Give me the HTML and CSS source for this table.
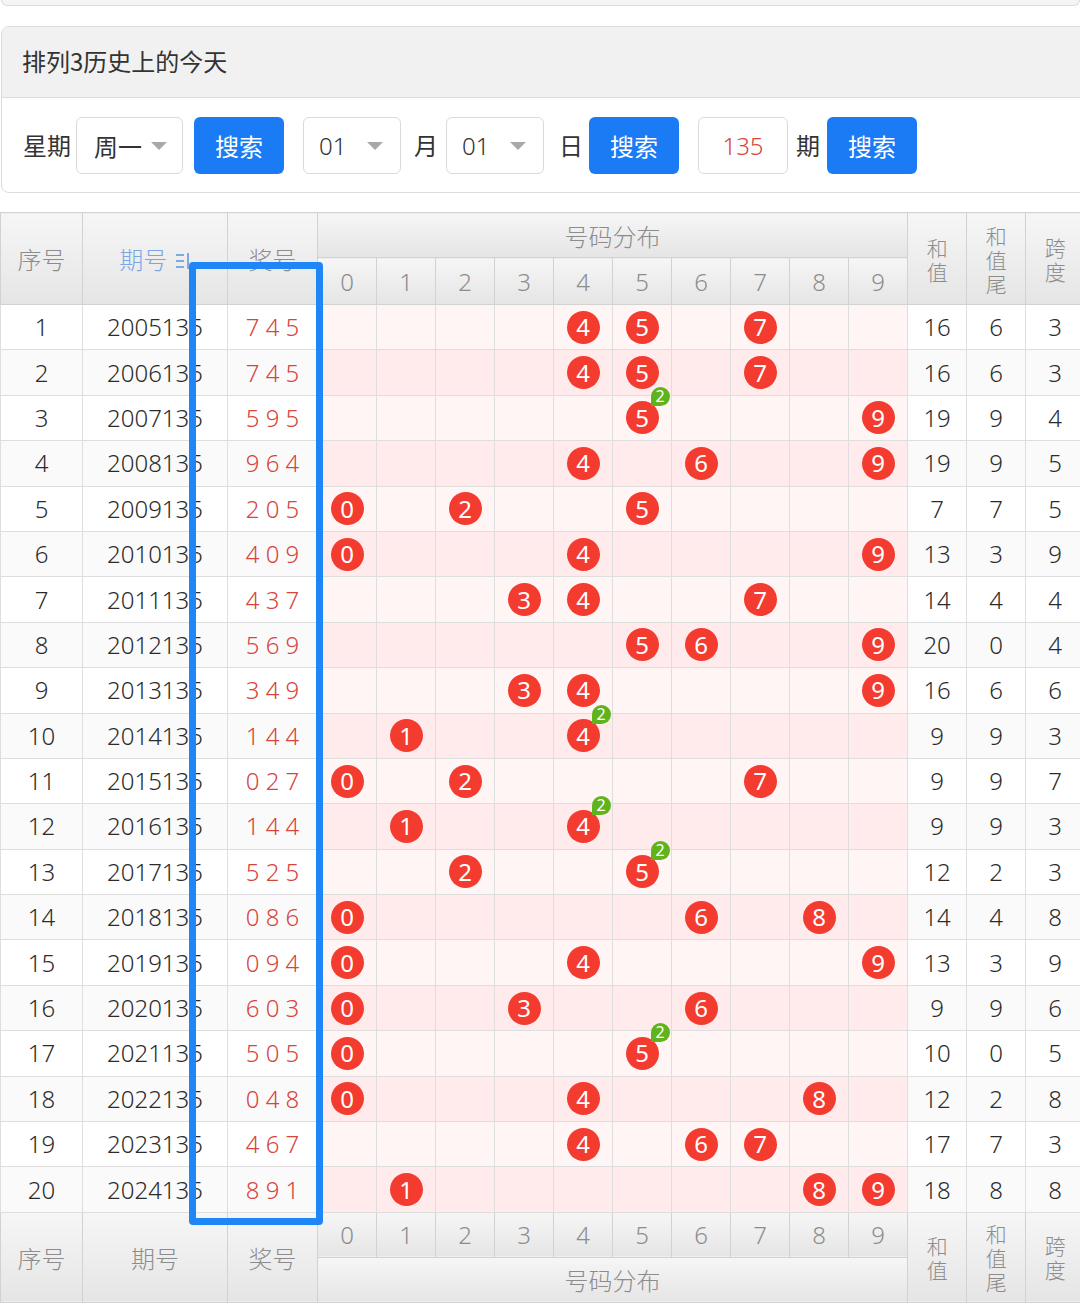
FILE: index.html
```html
<!DOCTYPE html>
<html lang="zh-CN">
<head>
<meta charset="utf-8">
<title>排列3历史上的今天</title>
<link rel="stylesheet" href="styles.css">
</head>
<body>
<div class="prev-card"></div>
<section class="card">
  <div class="card-head">排列3历史上的今天</div>
  <div class="card-body">
    <span class="lbl">星期</span>
    <span class="sel sel-week"><span class="val">周一</span><i class="caret"></i></span>
    <button class="btn b1">搜索</button>
    <span class="sel sel-num s2"><span class="val">01</span><i class="caret"></i></span>
    <span class="lbl l-month">月</span>
    <span class="sel sel-num s3"><span class="val">01</span><i class="caret"></i></span>
    <span class="lbl l-day">日</span>
    <button class="btn b2">搜索</button>
    <span class="inp">135</span>
    <span class="lbl l-qi">期</span>
    <button class="btn b3">搜索</button>
  </div>
</section>

<div class="table-wrap">
<table class="chart">
  <colgroup>
    <col class="c-no"><col class="c-issue"><col class="c-award">
    <col class="c-d"><col class="c-d"><col class="c-d"><col class="c-d"><col class="c-d">
    <col class="c-d"><col class="c-d"><col class="c-d"><col class="c-d"><col class="c-d">
    <col class="c-s"><col class="c-s"><col class="c-s">
  </colgroup>
  <thead>
    <tr class="h1">
      <th rowspan="2">序号</th>
      <th rowspan="2" class="sort">期号 <svg class="sort-ico" width="16" height="20" viewBox="0 0 16 20"><path d="M1 4h8M1 10h8M1 16h8M13 2v16" stroke="#7fa9e3" stroke-width="2" fill="none"/></svg></th>
      <th rowspan="2">奖号</th>
      <th colspan="10">号码分布</th>
      <th rowspan="2" class="vt">和<br>值</th>
      <th rowspan="2" class="vt">和<br>值<br>尾</th>
      <th rowspan="2" class="vt">跨<br>度</th>
    </tr>
    <tr class="h2">
      <th>0</th><th>1</th><th>2</th><th>3</th><th>4</th><th>5</th><th>6</th><th>7</th><th>8</th><th>9</th>
    </tr>
  </thead>
  <tbody>
    <tr><td>1</td><td>2005135</td><td class="aw">7 4 5</td><td class="d"></td><td class="d"></td><td class="d"></td><td class="d"></td><td class="d"><span class="ball">4</span></td><td class="d"><span class="ball">5</span></td><td class="d"></td><td class="d"><span class="ball">7</span></td><td class="d"></td><td class="d"></td><td>16</td><td>6</td><td>3</td></tr>
    <tr><td>2</td><td>2006135</td><td class="aw">7 4 5</td><td class="d"></td><td class="d"></td><td class="d"></td><td class="d"></td><td class="d"><span class="ball">4</span></td><td class="d"><span class="ball">5</span></td><td class="d"></td><td class="d"><span class="ball">7</span></td><td class="d"></td><td class="d"></td><td>16</td><td>6</td><td>3</td></tr>
    <tr><td>3</td><td>2007135</td><td class="aw">5 9 5</td><td class="d"></td><td class="d"></td><td class="d"></td><td class="d"></td><td class="d"></td><td class="d"><span class="ball">5<i class="rep">2</i></span></td><td class="d"></td><td class="d"></td><td class="d"></td><td class="d"><span class="ball">9</span></td><td>19</td><td>9</td><td>4</td></tr>
    <tr><td>4</td><td>2008135</td><td class="aw">9 6 4</td><td class="d"></td><td class="d"></td><td class="d"></td><td class="d"></td><td class="d"><span class="ball">4</span></td><td class="d"></td><td class="d"><span class="ball">6</span></td><td class="d"></td><td class="d"></td><td class="d"><span class="ball">9</span></td><td>19</td><td>9</td><td>5</td></tr>
    <tr><td>5</td><td>2009135</td><td class="aw">2 0 5</td><td class="d"><span class="ball">0</span></td><td class="d"></td><td class="d"><span class="ball">2</span></td><td class="d"></td><td class="d"></td><td class="d"><span class="ball">5</span></td><td class="d"></td><td class="d"></td><td class="d"></td><td class="d"></td><td>7</td><td>7</td><td>5</td></tr>
    <tr><td>6</td><td>2010135</td><td class="aw">4 0 9</td><td class="d"><span class="ball">0</span></td><td class="d"></td><td class="d"></td><td class="d"></td><td class="d"><span class="ball">4</span></td><td class="d"></td><td class="d"></td><td class="d"></td><td class="d"></td><td class="d"><span class="ball">9</span></td><td>13</td><td>3</td><td>9</td></tr>
    <tr><td>7</td><td>2011135</td><td class="aw">4 3 7</td><td class="d"></td><td class="d"></td><td class="d"></td><td class="d"><span class="ball">3</span></td><td class="d"><span class="ball">4</span></td><td class="d"></td><td class="d"></td><td class="d"><span class="ball">7</span></td><td class="d"></td><td class="d"></td><td>14</td><td>4</td><td>4</td></tr>
    <tr><td>8</td><td>2012135</td><td class="aw">5 6 9</td><td class="d"></td><td class="d"></td><td class="d"></td><td class="d"></td><td class="d"></td><td class="d"><span class="ball">5</span></td><td class="d"><span class="ball">6</span></td><td class="d"></td><td class="d"></td><td class="d"><span class="ball">9</span></td><td>20</td><td>0</td><td>4</td></tr>
    <tr><td>9</td><td>2013135</td><td class="aw">3 4 9</td><td class="d"></td><td class="d"></td><td class="d"></td><td class="d"><span class="ball">3</span></td><td class="d"><span class="ball">4</span></td><td class="d"></td><td class="d"></td><td class="d"></td><td class="d"></td><td class="d"><span class="ball">9</span></td><td>16</td><td>6</td><td>6</td></tr>
    <tr><td>10</td><td>2014135</td><td class="aw">1 4 4</td><td class="d"></td><td class="d"><span class="ball">1</span></td><td class="d"></td><td class="d"></td><td class="d"><span class="ball">4<i class="rep">2</i></span></td><td class="d"></td><td class="d"></td><td class="d"></td><td class="d"></td><td class="d"></td><td>9</td><td>9</td><td>3</td></tr>
    <tr><td>11</td><td>2015135</td><td class="aw">0 2 7</td><td class="d"><span class="ball">0</span></td><td class="d"></td><td class="d"><span class="ball">2</span></td><td class="d"></td><td class="d"></td><td class="d"></td><td class="d"></td><td class="d"><span class="ball">7</span></td><td class="d"></td><td class="d"></td><td>9</td><td>9</td><td>7</td></tr>
    <tr><td>12</td><td>2016135</td><td class="aw">1 4 4</td><td class="d"></td><td class="d"><span class="ball">1</span></td><td class="d"></td><td class="d"></td><td class="d"><span class="ball">4<i class="rep">2</i></span></td><td class="d"></td><td class="d"></td><td class="d"></td><td class="d"></td><td class="d"></td><td>9</td><td>9</td><td>3</td></tr>
    <tr><td>13</td><td>2017135</td><td class="aw">5 2 5</td><td class="d"></td><td class="d"></td><td class="d"><span class="ball">2</span></td><td class="d"></td><td class="d"></td><td class="d"><span class="ball">5<i class="rep">2</i></span></td><td class="d"></td><td class="d"></td><td class="d"></td><td class="d"></td><td>12</td><td>2</td><td>3</td></tr>
    <tr><td>14</td><td>2018135</td><td class="aw">0 8 6</td><td class="d"><span class="ball">0</span></td><td class="d"></td><td class="d"></td><td class="d"></td><td class="d"></td><td class="d"></td><td class="d"><span class="ball">6</span></td><td class="d"></td><td class="d"><span class="ball">8</span></td><td class="d"></td><td>14</td><td>4</td><td>8</td></tr>
    <tr><td>15</td><td>2019135</td><td class="aw">0 9 4</td><td class="d"><span class="ball">0</span></td><td class="d"></td><td class="d"></td><td class="d"></td><td class="d"><span class="ball">4</span></td><td class="d"></td><td class="d"></td><td class="d"></td><td class="d"></td><td class="d"><span class="ball">9</span></td><td>13</td><td>3</td><td>9</td></tr>
    <tr><td>16</td><td>2020135</td><td class="aw">6 0 3</td><td class="d"><span class="ball">0</span></td><td class="d"></td><td class="d"></td><td class="d"><span class="ball">3</span></td><td class="d"></td><td class="d"></td><td class="d"><span class="ball">6</span></td><td class="d"></td><td class="d"></td><td class="d"></td><td>9</td><td>9</td><td>6</td></tr>
    <tr><td>17</td><td>2021135</td><td class="aw">5 0 5</td><td class="d"><span class="ball">0</span></td><td class="d"></td><td class="d"></td><td class="d"></td><td class="d"></td><td class="d"><span class="ball">5<i class="rep">2</i></span></td><td class="d"></td><td class="d"></td><td class="d"></td><td class="d"></td><td>10</td><td>0</td><td>5</td></tr>
    <tr><td>18</td><td>2022135</td><td class="aw">0 4 8</td><td class="d"><span class="ball">0</span></td><td class="d"></td><td class="d"></td><td class="d"></td><td class="d"><span class="ball">4</span></td><td class="d"></td><td class="d"></td><td class="d"></td><td class="d"><span class="ball">8</span></td><td class="d"></td><td>12</td><td>2</td><td>8</td></tr>
    <tr><td>19</td><td>2023135</td><td class="aw">4 6 7</td><td class="d"></td><td class="d"></td><td class="d"></td><td class="d"></td><td class="d"><span class="ball">4</span></td><td class="d"></td><td class="d"><span class="ball">6</span></td><td class="d"><span class="ball">7</span></td><td class="d"></td><td class="d"></td><td>17</td><td>7</td><td>3</td></tr>
    <tr><td>20</td><td>2024135</td><td class="aw">8 9 1</td><td class="d"></td><td class="d"><span class="ball">1</span></td><td class="d"></td><td class="d"></td><td class="d"></td><td class="d"></td><td class="d"></td><td class="d"></td><td class="d"><span class="ball">8</span></td><td class="d"><span class="ball">9</span></td><td>18</td><td>8</td><td>8</td></tr>
  </tbody>
  <tfoot>
    <tr class="f1">
      <th rowspan="2">序号</th>
      <th rowspan="2">期号</th>
      <th rowspan="2">奖号</th>
      <th>0</th><th>1</th><th>2</th><th>3</th><th>4</th><th>5</th><th>6</th><th>7</th><th>8</th><th>9</th>
      <th rowspan="2" class="vt">和<br>值</th>
      <th rowspan="2" class="vt">和<br>值<br>尾</th>
      <th rowspan="2" class="vt">跨<br>度</th>
    </tr>
    <tr class="f2">
      <th colspan="10">号码分布</th>
    </tr>
  </tfoot>
</table>
<div class="highlight"></div>
</div>
</body>
</html>
```
FILE: styles.css
```css
html, body {
  margin: 0;
  padding: 0;
  background: #fff;
  overflow: hidden;
}
body {
  width: 1080px;
  font-family: "Noto Sans", "Noto Sans CJK SC", sans-serif;
  color: #333;
}

.prev-card {
  height: 5px;
  margin: 0 0 0 1px;
  border: 1px solid #dcdcdc;
  border-top: none;
  border-radius: 0 0 8px 8px;
  background: #f5f5f5;
}

.card {
  margin: 20px 0 0 1px;
  width: 1090px;
  border: 1px solid #dcdcdc;
  border-radius: 8px;
  overflow: hidden;
  background: #fff;
}
.card-head {
  height: 70px;
  line-height: 68px;
  background: #f1f1f1;
  border-bottom: 1px solid #dcdcdc;
  padding-left: 20px;
  font-size: 24px;
  color: #333;
  font-family: "Noto Sans CJK SC", sans-serif;
}
.card-body {
  height: 94px;
  display: flex;
  align-items: center;
  padding-left: 21px;
  font-size: 24px;
}
.lbl {
  font-family: "Noto Sans CJK SC", sans-serif;
  color: #333;
  font-size: 24px;
  line-height: 1;
}
.sel {
  box-sizing: border-box;
  height: 57px;
  border: 1px solid #dadada;
  border-radius: 6px;
  display: flex;
  align-items: center;
  position: relative;
  background: #fff;
}
.sel .val {
  font-size: 24px;
  color: #333;
  font-weight: 300;
}
.sel-week {
  width: 107px;
  margin-left: 5px;
  padding-left: 17px;
}
.sel-week .val { font-family: "Noto Sans CJK SC", sans-serif; font-weight: 400; }
.sel-num {
  width: 98px;
  padding-left: 15px;
}
.s2 { margin-left: 19px; }
.s3 { margin-left: 8px; }
.caret {
  position: absolute;
  right: 17px;
  top: 24px;
  width: 0;
  height: 0;
  border-left: 8px solid transparent;
  border-right: 8px solid transparent;
  border-top: 8px solid #a9a9a9;
}
.sel-week .caret { right: 15px; }
.l-month { margin-left: 13px; }
.l-day { margin-left: 15px; }
.l-qi { margin-left: 8px; }

.btn {
  box-sizing: border-box;
  width: 90px;
  height: 57px;
  border: none;
  border-radius: 6px;
  background: #1a7bf4;
  color: #fff;
  font-family: "Noto Sans CJK SC", sans-serif;
  font-size: 24px;
  padding: 0;
}
.b1 { margin-left: 11px; }
.b2 { margin-left: 6px; }
.b3 { margin-left: 7px; }
.inp {
  box-sizing: border-box;
  width: 90px;
  height: 57px;
  margin-left: 19px;
  border: 1px solid #dadada;
  border-radius: 6px;
  display: flex;
  align-items: center;
  justify-content: center;
  color: #d8433a;
  font-size: 24px;
  font-weight: 300;
}

.table-wrap {
  position: relative;
  margin-top: 19px;
  width: 1084px;
}
.chart {
  border-collapse: collapse;
  table-layout: fixed;
  width: 1084px;
  font-size: 24px;
  font-weight: 300;
}
.c-no { width: 82px; }
.c-issue { width: 145px; }
.c-award { width: 90px; }
.c-d { width: 59px; }
.c-s { width: 59px; }

.chart th, .chart td {
  border: 1px solid #dedede;
  text-align: center;
  padding: 0;
}
.chart th {
  font-family: "Noto Sans", "Noto Sans CJK SC", sans-serif;
  font-weight: 300;
  color: #8c8c8c;
  background: linear-gradient(#f6f6f6, #e5e5e5);
  font-size: 24px;
}
.chart thead th, .chart tfoot th {
  border-color: #d2d2d2;
}
.chart .h1 th:not([rowspan]), .chart .f2 th { font-family: "Noto Sans CJK SC", sans-serif; }
.chart th[rowspan] { font-family: "Noto Sans CJK SC", sans-serif; }
.h1 { height: 45px; }
.h2 { height: 47px; }
.h2 th { vertical-align: middle; }
.f1 { height: 45px; }
.f2 { height: 45px; }
.chart th.vt {
  font-size: 21px;
  line-height: 24px;
}
.sort { color: #79a6e4 !important; }
.sort-ico { vertical-align: -2px; margin-left: 2px; }

.chart tbody tr { height: 45.4px; }
.chart tbody td {
  background: #fff;
  color: #2b2b2b;
  line-height: 1;
}
.chart tbody tr:nth-child(even) td { background: #fafafa; }
.chart tbody td.d { background: #fff5f4; }
.chart tbody tr:nth-child(even) td.d { background: #ffebeb; }
.chart td.aw {
  color: #d8433a;
  letter-spacing: 0;
  white-space: pre;
}

.ball {
  position: relative;
  display: inline-flex;
  align-items: center;
  justify-content: center;
  width: 33px;
  height: 33px;
  border-radius: 50%;
  background: #f33b2f;
  color: #fff;
  font-size: 24px;
  font-weight: 400;
  vertical-align: middle;
}
.rep {
  position: absolute;
  left: 25px;
  top: -14px;
  width: 19px;
  height: 19px;
  border-radius: 50% 50% 50% 0;
  background: #5fb31c;
  color: #fff;
  font-style: normal;
  font-size: 16px;
  line-height: 19px;
  text-align: center;
  font-weight: 400;
}

.highlight {
  position: absolute;
  left: 189px;
  top: 50px;
  width: 134px;
  height: 963px;
  box-sizing: border-box;
  border: 7px solid #1e86f6;
  border-radius: 4px;
  pointer-events: none;
}
```
